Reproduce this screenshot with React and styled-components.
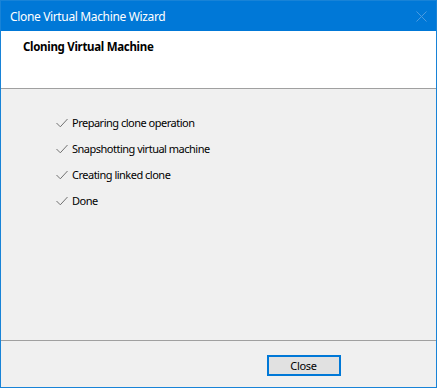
import React from 'react'
import styled, { createGlobalStyle } from 'styled-components';

const Global = createGlobalStyle`
  html, body { margin: 0; padding: 0; background: #f0f0f0; }
  body { font-family: "Noto Sans", "Open Sans", sans-serif; font-size: 11px; }
`;

const Window = styled.div`
  width: 437px;
  height: 388px;
  box-sizing: border-box;
  border: 1px solid #1883d7;
  display: flex;
  flex-direction: column;
  background: #f0f0f0;
`;

const TitleBar = styled.div`
  height: 30px;
  background: #0078d7;
  color: #fff;
  display: flex;
  align-items: center;
  padding: 0 0 0 9px;
  flex-shrink: 0;
`;

const TitleText = styled.div`
  flex: 1;
  font-size: 12px;
  letter-spacing: -0.35px;
`;

const CloseX = styled.div`
  width: 30px;
  height: 30px;
  display: flex;
  align-items: center;
  justify-content: center;
`;

const Header = styled.div`
  height: 49px;
  background: #fff;
  border-bottom: 1px solid #a0a0a0;
  padding: 8px 0 0 22px;
  flex-shrink: 0;
`;

const HeaderTitle = styled.div`
  font-weight: bold;
  font-size: 11.5px;
  letter-spacing: -0.3px;
  color: #000;
`;

const Body = styled.div`
  flex: 1;
  padding: 25px 0 0 55px;
  display: flex;
  flex-direction: column;
  gap: 10px;
  border-bottom: 1px solid #a0a0a0;
`;

const Step = styled.div`
  display: flex;
  align-items: center;
  gap: 4px;
  height: 16px;
  color: #000;
  letter-spacing: -0.5px;
`;

const Footer = styled.div`
  height: 46px;
  display: flex;
  align-items: flex-start;
  justify-content: flex-end;
  padding: 14px 95px 0 0;
  box-sizing: border-box;
  flex-shrink: 0;
`;

const Button = styled.button`
  width: 74px;
  height: 21px;
  box-sizing: border-box;
  border: 2px solid #0078d7;
  background: #e1e1e1;
  font: inherit;
  font-size: 11px;
  letter-spacing: -0.3px;
  color: #000;
  padding: 0 1px 0 0;
`;

const Check = () => (
  <svg width="12" height="12" viewBox="0 0 12 12">
    <path d="M0.5 7 L4.3 10.8 L11.5 3" fill="none" stroke="#707070" strokeWidth="1" />
  </svg>
);

const steps = [
  'Preparing clone operation',
  'Snapshotting virtual machine',
  'Creating linked clone',
  'Done',
];

const App = () => (
  <>
    <Global />
    <Window>
      <TitleBar>
        <TitleText>Clone Virtual Machine Wizard</TitleText>
        <CloseX>
          <svg width="11" height="11" viewBox="0 0 11 11">
            <path d="M0.5 0.5 L10.5 10.5 M10.5 0.5 L0.5 10.5" stroke="#4a9be0" strokeWidth="1" />
          </svg>
        </CloseX>
      </TitleBar>
      <Header>
        <HeaderTitle>Cloning Virtual Machine</HeaderTitle>
      </Header>
      <Body>
        {steps.map(s => (
          <Step key={s}><Check />{s}</Step>
        ))}
      </Body>
      <Footer>
        <Button>Close</Button>
      </Footer>
    </Window>
  </>
)

export default App
